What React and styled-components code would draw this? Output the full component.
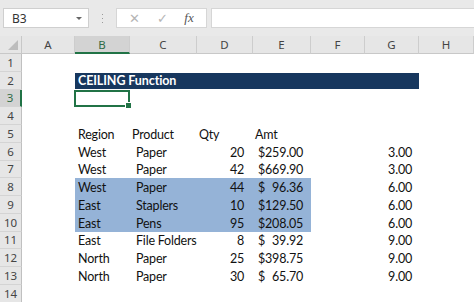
import React from 'react';
import styled, { createGlobalStyle } from 'styled-components';

const GlobalStyle = createGlobalStyle`
    body {
        margin: 0;
        background: #ffffff;
    }
`

const Window = styled.div`
    width: 474px;
    height: 302px;
    overflow: hidden;
    background: #ffffff;
    font-family: "Noto Sans", "Open Sans", sans-serif;
`
const FormulaBar = styled.div`
    height: 36px;
    box-sizing: border-box;
    padding: 8px 0 8px 3px;
    background: #e9e9e9;
    display: flex;
    align-items: stretch;
`
const NameBox = styled.div`
    width: 86px;
    box-sizing: border-box;
    background: #ffffff;
    border: 1px solid #cfcfcf;
    display: flex;
    align-items: center;
    justify-content: space-between;
    padding: 0 6px 0 8px;
    font-size: 12px;
    color: #333;
`
const Caret = styled.span`
    width: 0;
    height: 0;
    border-left: 3px solid transparent;
    border-right: 3px solid transparent;
    border-top: 3px solid #666;
`
const Grip = styled.div`
    width: 27px;
    display: flex;
    flex-direction: column;
    align-items: center;
    justify-content: center;
    gap: 3px;
    span {
        width: 1px;
        height: 1px;
        background: #9a9a9a;
    }
`
const FxBox = styled.div`
    width: 91px;
    box-sizing: border-box;
    background: #ffffff;
    border: 1px solid #d6d6d6;
    display: flex;
    align-items: center;
    justify-content: space-around;
    padding: 0 4px;
    color: #b5b5b5;
    font-size: 13px;
`
const Fx = styled.span`
    font-family: "Liberation Serif", serif;
    font-style: italic;
    color: #555;
    font-size: 13px;
`
const FormulaInput = styled.div`
    flex: 1;
    margin-left: 4px;
    background: #ffffff;
    border: 1px solid #d6d6d6;
    border-right: none;
`
const Sheet = styled.div`
    display: grid;
    grid-template-columns: 22px 53px 55px 67px 56px 58px 54px 54px 55px;
    grid-template-rows: 18px repeat(14, 17.75px);
`
const Corner = styled.div`
    background: #e6e6e6;
    border-right: 1px solid #c8c8c8;
    border-bottom: 1px solid #c8c8c8;
    position: relative;
    &::after {
        content: "";
        position: absolute;
        right: 3px;
        bottom: 3px;
        border-left: 10px solid transparent;
        border-bottom: 10px solid #bdbdbd;
    }
`
const ColHead = styled.div`
    background: ${props => props.$active ? '#d3d3d3' : '#e6e6e6'};
    border-right: 1px solid #cdcdcd;
    border-bottom: ${props => props.$active ? '2px solid #217346' : '1px solid #c8c8c8'};
    display: flex;
    align-items: center;
    justify-content: center;
    font-size: 11.5px;
    color: ${props => props.$active ? '#2f6b46' : '#444'};
`
const RowHead = styled.div`
    background: ${props => props.$active ? '#d3d3d3' : '#e6e6e6'};
    border-right: ${props => props.$active ? '2px solid #217346' : '1px solid #c0c0c0'};
    border-bottom: 1px solid #d4d4d4;
    display: flex;
    align-items: center;
    justify-content: center;
    font-size: 11.5px;
    color: ${props => props.$active ? '#2f6b46' : '#444'};
`
const Cell = styled.div`
    background: ${props => props.$fill || 'transparent'};
    display: flex;
    align-items: flex-end;
    justify-content: ${props => props.$spread ? 'space-between' : props.$right ? 'flex-end' : 'flex-start'};
    padding: 0 ${props => props.$pr || 0}px 1px ${props => props.$pl || 3}px;
    font-family: "Lato", "Open Sans", sans-serif;
    font-size: 12.5px;
    letter-spacing: -0.2px;
    color: #111;
    white-space: nowrap;
    overflow: ${props => props.$spill ? 'visible' : 'hidden'};
    min-width: 0;
`
const TitleCell = styled(Cell)`
    grid-column: span 6;
    background: #17375e;
    color: #ffffff;
    font-weight: bold;
    letter-spacing: -0.1px;
    margin: 1px 0;
    padding-bottom: 0;
    align-items: center;
`
const Selected = styled.div`
    border: 2px solid #217346;
    margin: 0 0 0 -1px;
    position: relative;
    &::after {
        content: "";
        position: absolute;
        right: -4px;
        bottom: -4px;
        width: 5px;
        height: 5px;
        background: #217346;
        border: 1px solid #ffffff;
    }
`

const cols = ['A', 'B', 'C', 'D', 'E', 'F', 'G', 'H'];
const blue = '#95b3d7';

const data = [
    ['West', 'Paper', 20, '259.00', '3.00'],
    ['West', 'Paper', 42, '669.90', '3.00'],
    ['West', 'Paper', 44, '96.36', '6.00', true],
    ['East', 'Staplers', 10, '129.50', '6.00', true],
    ['East', 'Pens', 95, '208.05', '6.00', true],
    ['East', 'File Folders', 8, '39.92', '9.00'],
    ['North', 'Paper', 25, '398.75', '9.00'],
    ['North', 'Paper', 30, '65.70', '9.00'],
];

const App = () => {
    return (
        <Window>
            <GlobalStyle />
            <FormulaBar>
                <NameBox>B3<Caret /></NameBox>
                <Grip><span /><span /><span /></Grip>
                <FxBox>
                    <span>✕</span>
                    <span>✓</span>
                    <Fx>fx</Fx>
                </FxBox>
                <FormulaInput />
            </FormulaBar>
            <Sheet>
                <Corner />
                {cols.map(c => <ColHead key={c} $active={c === 'B'}>{c}</ColHead>)}

                <RowHead>1</RowHead>
                {cols.map(c => <Cell key={c} />)}

                <RowHead>2</RowHead>
                <Cell />
                <TitleCell>CEILING Function</TitleCell>
                <Cell />

                <RowHead $active>3</RowHead>
                <Cell />
                <Selected />
                {cols.slice(2).map(c => <Cell key={c} />)}

                <RowHead>4</RowHead>
                {cols.map(c => <Cell key={c} />)}

                <RowHead>5</RowHead>
                <Cell />
                <Cell>Region</Cell>
                <Cell $pl={2}>Product</Cell>
                <Cell $pl={2}>Qty</Cell>
                <Cell $pl={2}>Amt</Cell>
                <Cell /><Cell /><Cell />

                {data.map((r, i) => {
                    const fill = r[5] ? blue : null;
                    return (
                        <React.Fragment key={i}>
                            <RowHead>{i + 6}</RowHead>
                            <Cell />
                            <Cell $fill={fill}>{r[0]}</Cell>
                            <Cell $fill={fill} $pl={6} $spill>{r[1]}</Cell>
                            <Cell $fill={fill} $right $pr={9}>{r[2]}</Cell>
                            <Cell $fill={fill} $spread $pl={5} $pr={8}>
                                <span>$</span>
                                <span>{r[3]}</span>
                            </Cell>
                            <Cell />
                            <Cell $right $pr={7}>{r[4]}</Cell>
                            <Cell />
                        </React.Fragment>
                    );
                })}

                <RowHead>14</RowHead>
                {cols.map(c => <Cell key={c} />)}
            </Sheet>
        </Window>
    );
};

export default App;
